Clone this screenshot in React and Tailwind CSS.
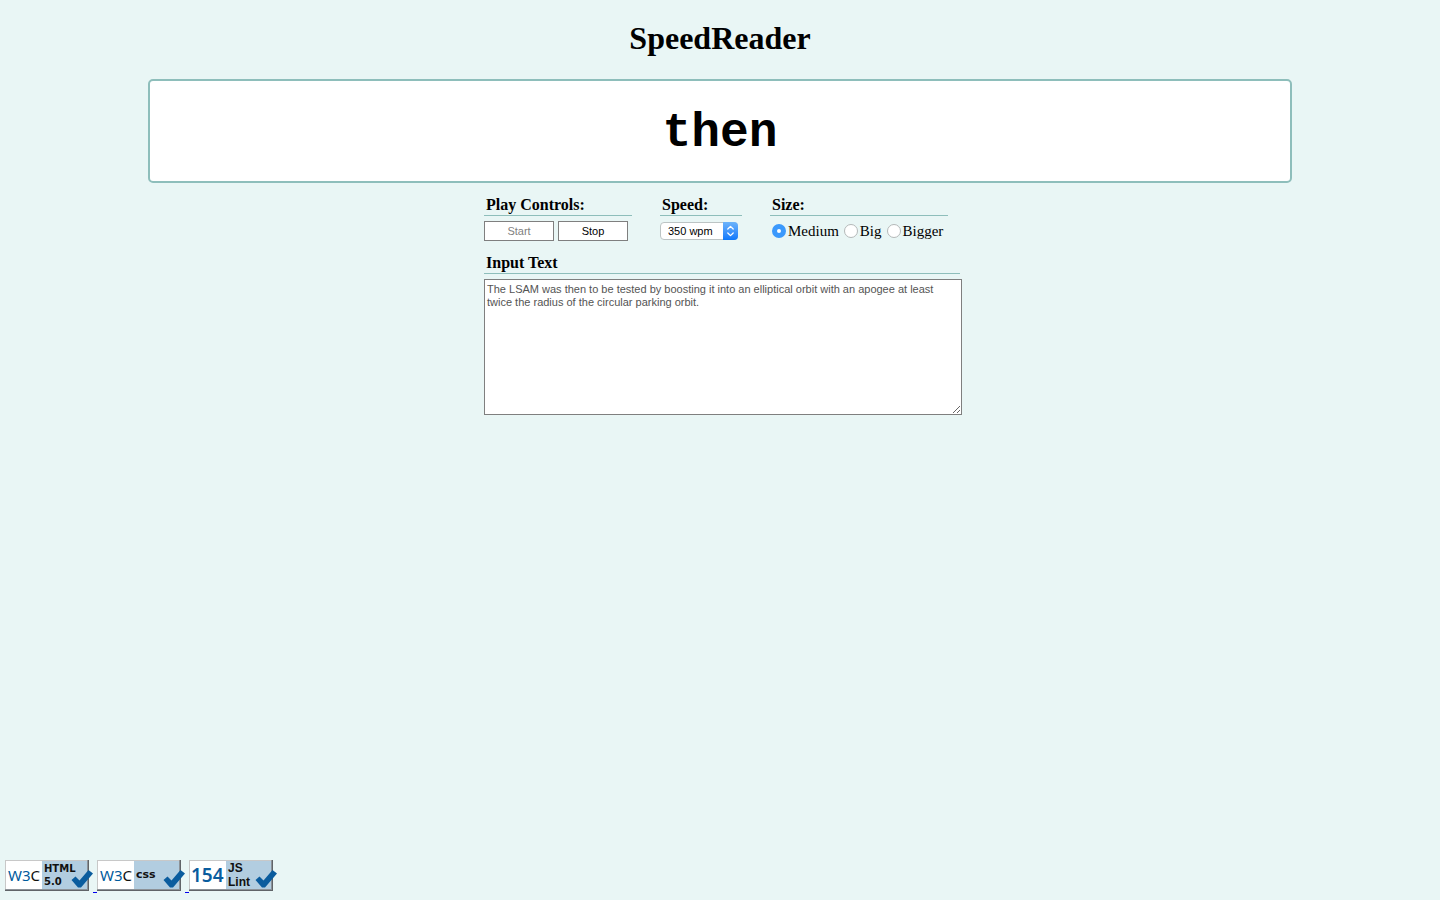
import { useState } from "react";

const SERIF = "font-['Liberation_Serif',serif]";
const SANS = "font-['Liberation_Sans',sans-serif]";

function Heading({ children, className = "" }) {
  return (
    <h2 className={`h-[21px] border-b border-[#8ebebb] pl-0.5 text-base leading-5 font-bold ${className}`}>
      {children}
    </h2>
  );
}

function W3CMark() {
  return (
    <text x="3" y="21" fontFamily="'Noto Sans', sans-serif" fontSize="15" fill="#005a9c">
      W3<tspan fill="#111">C</tspan>
    </text>
  );
}

function Badge({ href, label, children }) {
  return (
    <a href={href} aria-label={label} className="block">
      <svg width="88" height="31" viewBox="0 0 88 31">
        <rect width="84" height="31" fill="#606468" />
        <path d="M0 30V0H83L82 1V29H1Z" fill="#c8c8c8" />
        <path d="M82 1V29H1V30H83V1Z" fill="#8c9298" />
        <rect x="1" y="1" width="36" height="28" fill="#fff" />
        <rect x="37" y="1" width="45" height="28" fill="#b2cde0" />
        {children}
        <path d="M66.5 20L70.5 16.5L74.5 20.5L83.5 10L88 13.5L76 27.5H73Z" fill="#0a5c9e" />
      </svg>
    </a>
  );
}

function LinkSpace() {
  return <span className="h-[33px] w-1 border-b border-[#0000ee]" />;
}

const sizes = [
  { id: "medium", name: "Medium", word: "text-5xl" },
  { id: "big", name: "Big", word: "text-6xl" },
  { id: "bigger", name: "Bigger", word: "text-7xl" },
];

export default function App() {
  const [size, setSize] = useState("medium");
  const [running, setRunning] = useState(true);
  const word = sizes.find((s) => s.id === size).word;

  return (
    <div className={`flex min-h-screen flex-col bg-[#e9f6f5] px-[5px] pb-[7px] text-black ${SERIF}`}>
      <h1 className="pt-[18px] text-center text-[32px] leading-10 font-bold">SpeedReader</h1>

      <main className="pt-[21px]">
        <div className="mx-auto flex min-h-[104px] w-4/5 items-center justify-center rounded-[5px] border-2 border-[#8ebebb] bg-white pt-1">
          <output className={`font-['Liberation_Mono',monospace] font-bold ${word}`}>then</output>
        </div>

        <div className="mx-auto w-[484px] pt-3 pl-1.5">
          <div className="flex gap-7">
            <section className="w-[148px]">
              <Heading>Play Controls:</Heading>
              <div className="flex gap-1 pt-[5px]">
                <button
                  type="button"
                  disabled={running}
                  onClick={() => setRunning(true)}
                  className={`h-5 w-[70px] border border-[#7f7f7f] bg-white text-[11px] leading-4 disabled:text-[#7f7f7f] ${SANS}`}
                >
                  Start
                </button>
                <button
                  type="button"
                  onClick={() => setRunning(false)}
                  className={`h-5 w-[70px] border border-[#7f7f7f] bg-white text-[11px] leading-4 ${SANS}`}
                >
                  Stop
                </button>
              </div>
            </section>

            <section className="w-[82px]">
              <Heading>
                <label htmlFor="speed">Speed:</label>
              </Heading>
              <div className="relative mt-1.5 h-[18px] w-[78px]">
                <select
                  id="speed"
                  defaultValue="350"
                  className={`block h-[18px] w-full appearance-none rounded border border-[#bcc4c4] bg-white pl-[7px] text-[11px] leading-4 ${SANS}`}
                >
                  <option value="250">250 wpm</option>
                  <option value="350">350 wpm</option>
                  <option value="450">450 wpm</option>
                </select>
                <span className="pointer-events-none absolute inset-y-0 right-0 w-[15px] rounded-r bg-linear-to-b from-[#6bb3fa] to-[#0a78fb]">
                  <svg width="15" height="18" viewBox="0 0 15 18" fill="none" stroke="#fff" strokeWidth="1.3" strokeLinecap="round" strokeLinejoin="round">
                    <path d="M4.8 7L7.5 4.4L10.2 7M4.8 11L7.5 13.6L10.2 11" />
                  </svg>
                </span>
              </div>
            </section>

            <section className="w-[178px]">
              <Heading>Size:</Heading>
              <div className="flex gap-[5px] pt-[5px] pl-0.5">
                {sizes.map((s) => (
                  <label key={s.id} htmlFor={s.id} className="flex items-center gap-0.5 text-[15px] leading-5">
                    <input
                      type="radio"
                      id={s.id}
                      name="size"
                      checked={size === s.id}
                      onChange={() => setSize(s.id)}
                      className="size-3.5 appearance-none rounded-full border border-[#b4b8b8] bg-white checked:border-[5px] checked:border-[#3b99fc]"
                    />
                    {s.name}
                  </label>
                ))}
              </div>
            </section>
          </div>

          <section className="pt-3">
            <Heading className="mr-0.5">
              <label htmlFor="input-text">Input Text</label>
            </Heading>
            <textarea
              id="input-text"
              disabled={running}
              defaultValue="The LSAM was then to be tested by boosting it into an elliptical orbit with an apogee at least twice the radius of the circular parking orbit."
              className={`mt-[5px] block h-[136px] w-full resize border border-[#7f7f7f] bg-white px-0.5 py-[3px] text-[11px] leading-[13px] text-[#545454] ${SANS}`}
            />
          </section>
        </div>
      </main>

      <footer className="mt-auto flex items-start">
        <Badge href="#html" label="W3C HTML 5.0">
          <W3CMark />
          <g fontFamily="'DejaVu Sans', sans-serif" fontWeight="bold" fontSize="10" fill="#111">
            <text x="39" y="12">HTML</text>
            <text x="39" y="25">5.0</text>
          </g>
        </Badge>
        <LinkSpace />
        <Badge href="#css" label="W3C CSS">
          <W3CMark />
          <text x="39" y="18" fontFamily="'DejaVu Sans', sans-serif" fontWeight="bold" fontSize="11" fill="#111">
            css
          </text>
        </Badge>
        <LinkSpace />
        <Badge href="#jslint" label="154 JS Lint">
          <text x="2" y="22" fontFamily="'Noto Sans', sans-serif" fontSize="19" fontWeight="600" fill="#0a5c9e">
            154
          </text>
          <g fontFamily="'Liberation Sans', sans-serif" fontWeight="bold" fontSize="12" fill="#111">
            <text x="39" y="12">JS</text>
            <text x="39" y="26">Lint</text>
          </g>
        </Badge>
      </footer>
    </div>
  );
}
